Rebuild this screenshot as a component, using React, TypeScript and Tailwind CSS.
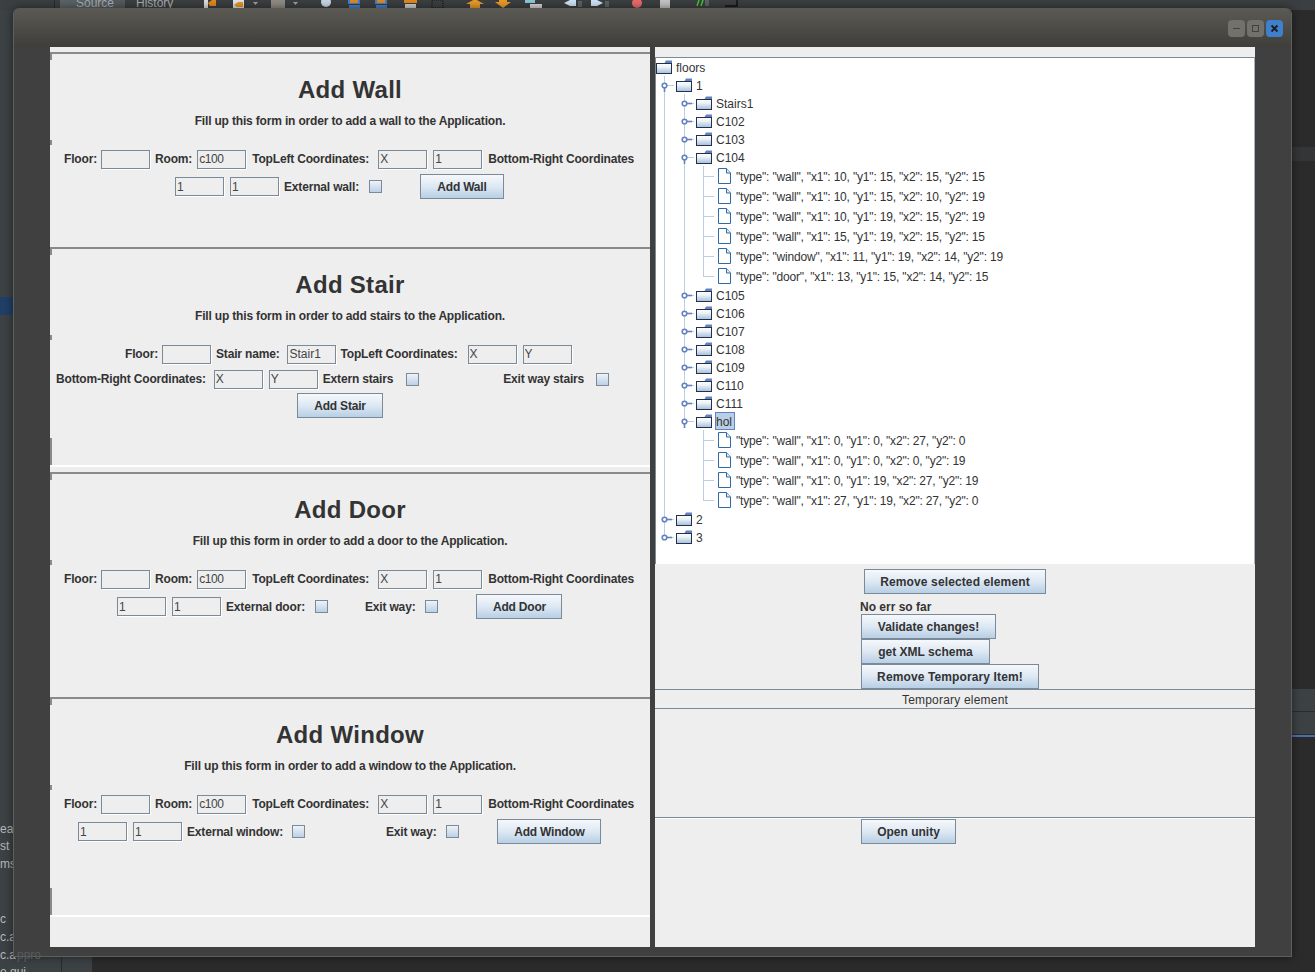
import React from "react";

const FONT = "font-['Liberation_Sans',Arial,sans-serif]";

function Lbl({ children, className = "" }: { children: React.ReactNode; className?: string }) {
  return <span className={`text-[12px] leading-[14px] font-bold tracking-[-0.17px] text-[#333333] whitespace-nowrap ${className}`}>{children}</span>;
}

function Field({ value = "", className = "" }: { value?: string; className?: string }) {
  return (
    <input
      readOnly
      value={value}
      className={`w-[49px] h-[19px] mr-[1px] border border-[#7a8a99] shadow-[1px_1px_0_#ffffff] bg-[#eeeeee] pl-[1px] pr-[2px] text-[12px] text-[#444444] outline-none ${FONT} ${className}`}
    />
  );
}

function Check({ className = "" }: { className?: string }) {
  return <span className={`block w-[13px] h-[13px] border border-[#7a8a99] bg-gradient-to-b from-[#eef3f8] to-[#bcd0e6] ${className}`} />;
}

function Btn({ children, className = "" }: { children: React.ReactNode; className?: string }) {
  return (
    <button className={`h-[25px] shrink-0 border border-[#7a8a99] bg-gradient-to-b from-[#f6f8fb] via-[#dde8f3] to-[#b8cfe5] text-[12px] font-bold text-[#333333] flex items-center justify-center ${FONT} ${className}`}>
      {children}
    </button>
  );
}

function Section({
  title,
  sub,
  h,
  whiteBottom,
  children,
}: {
  title: string;
  sub: string;
  h: string;
  whiteBottom?: boolean;
  children: React.ReactNode;
}) {
  return (
    <section className={`relative shrink-0 border-t-2 border-[#8a8a8a] ${h} flex flex-col`}>
      <span className="absolute left-0 top-0 w-[2px] h-[6px] bg-[#8a8a8a]" />
      <span className="absolute left-0 top-[86px] w-[2px] h-[5px] bg-[#8a8a8a]" />
      {whiteBottom && <span className="absolute left-0 bottom-[7px] w-[2px] h-[27px] bg-[#8a8a8a]" />}
      {whiteBottom && <span className="absolute left-0 right-0 bottom-[5px] h-[2px] bg-white" />}
      <h2 className="mt-[22px] h-[28px] text-center text-[24px] leading-[28px] font-bold tracking-[0.3px] text-[#333333]">{title}</h2>
      <p className="mt-[10px] h-[14px] text-center text-[12px] leading-[14px] font-bold tracking-[-0.17px] text-[#333333]">{sub}</p>
      {children}
    </section>
  );
}

type RowProps = { className?: string; children: React.ReactNode };
function Row({ className = "", children }: RowProps) {
  return <div className={`flex items-center ${className}`}>{children}</div>;
}

function FirstRow({ room = "c100" }: { room?: string }) {
  return (
    <Row className="mt-[21px] h-[20px] pl-[14px]">
      <Lbl>Floor:</Lbl>
      <Field className="ml-[4px]" />
      <Lbl className="ml-[4px]">Room:</Lbl>
      <Field value={room} className="ml-[5px] tracking-[-0.4px]" />
      <Lbl className="ml-[5px]">TopLeft Coordinates:</Lbl>
      <Field value="X" className="ml-[9px]" />
      <Field value="1" className="ml-[5px]" />
      <Lbl className="ml-[5px]">Bottom-Right Coordinates</Lbl>
    </Row>
  );
}

function Folder() {
  return (
    <svg width="16" height="14" viewBox="0 0 16 14" className="shrink-0">
      <defs>
        <linearGradient id="fg" x1="0" y1="0" x2="0" y2="1">
          <stop offset="0" stopColor="#ffffff" />
          <stop offset="0.35" stopColor="#eef3f8" />
          <stop offset="1" stopColor="#a3bfdc" />
        </linearGradient>
      </defs>
      <rect x="0.5" y="3.5" width="15" height="10" fill="url(#fg)" stroke="#22324a" />
      <path d="M8.5 3 L10 0.5 H16 V3 Z" fill="#6382bf" />
    </svg>
  );
}

function Leaf() {
  return (
    <svg width="13" height="16" viewBox="0 0 13 16" className="shrink-0">
      <path d="M0.5 0.5 H8.5 L12.5 5 V15.5 H0.5 Z" fill="#ffffff" stroke="#2f6aa8" />
      <path d="M8.5 0.5 V5 H12.5" fill="#dce8f4" stroke="#2f6aa8" />
    </svg>
  );
}

type Conn = {
  verts?: [number, number, number][];
  hline?: [number, number];
  handle?: { x: number; open: boolean };
};

function Gutter({ w, h, c }: { w: number; h: number; c: Conn }) {
  const m = h / 2;
  return (
    <svg width={w} height={h} viewBox={`0 0 ${w} ${h}`} className="shrink-0">
      {(c.verts || []).map(([x, a, b], i) => (
        <line key={i} x1={x + 0.5} x2={x + 0.5} y1={a} y2={b} stroke="#b8cfe5" />
      ))}
      {c.hline && <line x1={c.hline[0]} x2={c.hline[1]} y1={m + 0.5} y2={m + 0.5} stroke="#b8cfe5" />}
      {c.handle && (
        <g>
          {c.handle.open ? (
            <line x1={c.handle.x + 0.5} x2={c.handle.x + 0.5} y1={m} y2={m + 7} stroke="#6382bf" strokeWidth="1.6" />
          ) : (
            <line x1={c.handle.x + 0.5} x2={c.handle.x + 8} y1={m + 0.5} y2={m + 0.5} stroke="#6382bf" strokeWidth="1.6" />
          )}
          <circle cx={c.handle.x + 0.5} cy={m + 0.5} r="2.3" fill="#ffffff" stroke="#6382bf" strokeWidth="1.6" />
        </g>
      )}
    </svg>
  );
}

const V1: [number, number, number] = [8, 0, 20];
const V2: [number, number, number] = [28, 0, 20];

function FolderRow({ label, level, open, last, selected }: { label: string; level: 0 | 1 | 2; open?: boolean; last?: boolean; selected?: boolean }) {
  let g: React.ReactNode = null;
  if (level === 1) {
    g = (
      <Gutter
        w={20}
        h={18}
        c={{ verts: [[8, 0, last ? 9 : 18]], hline: [8, 18], handle: { x: 8, open: !!open } }}
      />
    );
  } else if (level === 2) {
    g = (
      <Gutter
        w={40}
        h={18}
        c={{ verts: [V1, [28, 0, selected ? 9 : 18]], hline: [28, 38], handle: { x: 28, open: !!open } }}
      />
    );
  }
  return (
    <div className="flex items-center h-[18px]">
      {g}
      <Folder />
      <span
        className={`ml-[3px] h-[18px] pr-[2px] border text-[12px] leading-[18px] text-[#333333] whitespace-nowrap ${
          selected ? "bg-[#b8cfe5] border-[#6382bf]" : "border-transparent"
        }`}
      >
        {label}
      </span>
    </div>
  );
}

function LeafRow({ text, last, l2 = true }: { text: string; last?: boolean; l2?: boolean }) {
  const verts: [number, number, number][] = [V1, [47, 0, last ? 10 : 20]];
  if (l2) verts.push(V2);
  return (
    <div className="flex items-center h-[20px]">
      <Gutter w={62} h={20} c={{ verts, hline: [47, 58] }} />
      <Leaf />
      <span className="ml-[5px] pt-[2px] text-[12px] leading-[14px] tracking-[-0.18px] text-[#333333] whitespace-nowrap">{text}</span>
    </div>
  );
}

function Tree() {
  return (
    <div className="h-[507px] shrink-0 border-t border-l border-r border-[#7a8a99] border-r-[#a9b3bd] bg-white overflow-hidden">
      <FolderRow label="floors" level={0} />
      <FolderRow label="1" level={1} open />
      <FolderRow label="Stairs1" level={2} />
      <FolderRow label="C102" level={2} />
      <FolderRow label="C103" level={2} />
      <FolderRow label="C104" level={2} open />
      <LeafRow text={'"type": "wall", "x1": 10, "y1": 15, "x2": 15, "y2": 15'} />
      <LeafRow text={'"type": "wall", "x1": 10, "y1": 15, "x2": 10, "y2": 19'} />
      <LeafRow text={'"type": "wall", "x1": 10, "y1": 19, "x2": 15, "y2": 19'} />
      <LeafRow text={'"type": "wall", "x1": 15, "y1": 19, "x2": 15, "y2": 15'} />
      <LeafRow text={'"type": "window", "x1": 11, "y1": 19, "x2": 14, "y2": 19'} />
      <LeafRow text={'"type": "door", "x1": 13, "y1": 15, "x2": 14, "y2": 15'} last />
      <FolderRow label="C105" level={2} />
      <FolderRow label="C106" level={2} />
      <FolderRow label="C107" level={2} />
      <FolderRow label="C108" level={2} />
      <FolderRow label="C109" level={2} />
      <FolderRow label="C110" level={2} />
      <FolderRow label="C111" level={2} />
      <FolderRow label="hol" level={2} open selected />
      <LeafRow l2={false} text={'"type": "wall", "x1": 0, "y1": 0, "x2": 27, "y2": 0'} />
      <LeafRow l2={false} text={'"type": "wall", "x1": 0, "y1": 0, "x2": 0, "y2": 19'} />
      <LeafRow l2={false} text={'"type": "wall", "x1": 0, "y1": 19, "x2": 27, "y2": 19'} />
      <LeafRow l2={false} text={'"type": "wall", "x1": 27, "y1": 19, "x2": 27, "y2": 0'} last />
      <FolderRow label="2" level={1} />
      <FolderRow label="3" level={1} last />
    </div>
  );
}

function Backdrop() {
  const t = "absolute left-0 text-[12px] leading-[14px] text-[#b4b8bb] whitespace-nowrap";
  return (
    <div className={`absolute inset-0 overflow-hidden bg-[#2b2b2b] ${FONT}`}>
      <div className="absolute left-0 top-0 right-0 h-[10px] bg-[#3c3f41]" />
      <div className="absolute left-[54px] top-0 w-[1px] h-[10px] bg-[#2b2b2b]" />
      <div className="absolute left-[60px] top-0 w-[65px] h-[10px] bg-gradient-to-r from-[#5c6468] to-[#525a5e]" />
      <span className="absolute left-[76px] top-[-4px] text-[12px] leading-[14px] text-[#a8adb0]">Source</span>
      <span className="absolute left-[136px] top-[-4px] text-[12px] leading-[14px] text-[#a8adb0]">History</span>
      <svg className="absolute left-[200px] top-0" width="540" height="10" viewBox="0 0 540 10">
        <rect x="4" y="0" width="4" height="8" fill="#dddddd" />
        <path d="M8 3 L12 0 H16 V6 H10Z" fill="#e08a1e" />
        <rect x="33" y="0" width="11" height="8" fill="#dfe6ee" />
        <path d="M34 5 L38 2 H43 V7 H37Z" fill="#e8961e" />
        <path d="M53 2 H58 L55.5 5Z" fill="#a0a0a0" />
        <rect x="71" y="0" width="14" height="8" fill="#8f8b84" />
        <path d="M93 2 H98 L95.5 5Z" fill="#a0a0a0" />
        <circle cx="126" cy="2" r="5" fill="#c9d6e2" />
        <path d="M148 0 H160 V4 H148Z M149 5 H160 V8 H149Z" fill="#3f7fd0" />
        <path d="M150 0 H158 V3 H150Z" fill="#e0891c" />
        <path d="M175 0 H187 V4 H175Z M176 5 H187 V8 H176Z" fill="#3f7fd0" />
        <path d="M177 0 H185 V3 H177Z" fill="#e0891c" />
        <rect x="204" y="0" width="13" height="3" fill="#e0891c" />
        <rect x="205" y="4" width="11" height="4" fill="#cfcfcf" />
        <rect x="232" y="0" width="11" height="8" fill="none" stroke="#111111" strokeDasharray="1 1" />
        <path d="M270 8 V4 H266 L275 -1 L284 4 H280 V8Z" fill="#e99a2a" />
        <path d="M299 -2 H307 V2 H311 L303 8 L295 2 H299Z" fill="#e99a2a" />
        <rect x="325" y="0" width="10" height="3" fill="#8cc8d8" />
        <rect x="330" y="4" width="12" height="4" fill="#d5d5d5" />
        <path d="M364 3 L370 0 H376 V6 H370Z" fill="#cfe3f5" />
        <rect x="378" y="1" width="4" height="6" fill="#5c6265" />
        <path d="M391 0 H397 L403 3 L397 6 H391Z" fill="#cfe3f5" />
        <rect x="405" y="1" width="4" height="6" fill="#5c6265" />
        <circle cx="437" cy="3" r="5" fill="#e96a6a" />
        <rect x="460" y="0" width="10" height="8" fill="#c4c4c4" />
        <path d="M497 6 L499 0 M501 6 L503 0" stroke="#44c638" strokeWidth="1.5" />
        <rect x="505" y="0" width="4" height="6" fill="#5c6265" />
        <path d="M525 6 H537 V0" fill="none" stroke="#111111" strokeWidth="1.4" />
      </svg>

      <div className="absolute left-0 top-[10px] bottom-0 w-[61px] bg-[#3c4144]" />
      <div className="absolute left-[61px] bottom-0 w-[31px] h-[20px] bg-[#3c4144] border-l border-[#2b2b2b]" />
      <div className="absolute left-0 top-[297px] w-[14px] h-[18px] bg-[#1f3f66]" />
      <span className={`${t} top-[822px]`}>ea</span>
      <span className={`${t} top-[839px]`}>st</span>
      <span className={`${t} top-[857px]`}>ms</span>
      <span className={`${t} top-[912px]`}>c</span>
      <span className={`${t} top-[930px]`}>c.a</span>
      <span className={`${t} top-[948px]`}>c.a</span>
      <span className={`${t} top-[965px]`}>e.gui</span>
      <div className="absolute right-0 top-[147px] w-[23px] h-[14px] bg-[#333537]" />
      <div className="absolute right-0 top-[689px] w-[23px] h-[22px] bg-[#3c4144]" />
      <div className="absolute right-0 top-[712px] w-[23px] h-[22px] bg-[#3c4144]" />
      <div className="absolute right-0 top-[735px] w-[23px] h-[2px] bg-[#4b6eaf]" />
    </div>
  );
}

function WinBtn({ className = "", children }: { className?: string; children: React.ReactNode }) {
  return <span className={`w-[17px] h-[17px] rounded-[4px] flex items-center justify-center ${className}`}>{children}</span>;
}

export default function App() {
  return (
    <div className={`relative w-[1315px] h-[972px] overflow-hidden ${FONT}`}>
      <Backdrop />
      <div className="relative ml-[13px] pt-[8px] w-[1279px]">
        <div className="h-[949px] rounded-t-[6px] border-b border-l border-r border-[#5f5f5f] bg-[#404040] shadow-[0_0_8px_rgba(0,0,0,0.5)] flex flex-col">
          <header className="h-[39px] shrink-0 rounded-t-[6px] bg-gradient-to-b from-[#5b5a55] to-[#3f3e3a] flex items-center justify-end gap-[2px] pr-[8px] pt-[1px]">
            <WinBtn className="bg-[#72716c]">
              <span className="w-[7px] h-[1px] bg-[#42413e]" />
            </WinBtn>
            <WinBtn className="bg-[#72716c]">
              <span className="w-[7px] h-[7px] border border-[#42413e]" />
            </WinBtn>
            <WinBtn className="bg-[#3f80cc]">
              <svg width="9" height="9" viewBox="0 0 9 9">
                <path d="M1.5 1.5 L7.5 7.5 M7.5 1.5 L1.5 7.5" stroke="#1d1d1d" strokeWidth="1.8" />
              </svg>
            </WinBtn>
          </header>
          <div className="flex gap-[5px] pl-[36px]">
            <main className="w-[600px] h-[900px] shrink-0 bg-[#eeeeee] pt-[5px] flex flex-col">
              <Section title="Add Wall" sub="Fill up this form in order to add a wall to the Application." h="h-[195px]">
                <FirstRow />
                <Row className="h-[25px] mt-[5px] pl-[125px]">
                  <Field value="1" />
                  <Field value="1" className="ml-[5px]" />
                  <Lbl className="ml-[4px]">External wall:</Lbl>
                  <Check className="ml-[10px]" />
                  <Btn className="ml-[38px] w-[84px] tracking-[-0.2px]">Add Wall</Btn>
                </Row>
              </Section>
              <Section title="Add Stair" sub="Fill up this form in order to add stairs to the Application." h="h-[225px]" whiteBottom>
                <Row className="mt-[21px] h-[20px] pl-[75px]">
                  <Lbl>Floor:</Lbl>
                  <Field className="ml-[4px]" />
                  <Lbl className="ml-[4px]">Stair name:</Lbl>
                  <Field value="Stair1" className="ml-[8px]" />
                  <Lbl className="ml-[3px]">TopLeft Coordinates:</Lbl>
                  <Field value="X" className="ml-[10px]" />
                  <Field value="Y" className="ml-[5px]" />
                </Row>
                <Row className="mt-[5px] h-[20px] pl-[6px]">
                  <Lbl>Bottom-Right Coordinates:</Lbl>
                  <Field value="X" className="ml-[8px]" />
                  <Field value="Y" className="ml-[5px]" />
                  <Lbl className="ml-[4px]">Extern stairs</Lbl>
                  <Check className="ml-[13px]" />
                  <Lbl className="ml-[84px]">Exit way stairs</Lbl>
                  <Check className="ml-[12px]" />
                </Row>
                <Row className="mt-[4px] h-[25px] pl-[247px]">
                  <Btn className="w-[86px] tracking-[-0.2px]">Add Stair</Btn>
                </Row>
              </Section>
              <Section title="Add Door" sub="Fill up this form in order to add a door to the Application." h="h-[225px]">
                <FirstRow />
                <Row className="h-[25px] mt-[5px] pl-[67px]">
                  <Field value="1" />
                  <Field value="1" className="ml-[5px]" />
                  <Lbl className="ml-[4px]">External door:</Lbl>
                  <Check className="ml-[10px]" />
                  <Lbl className="ml-[37px]">Exit way:</Lbl>
                  <Check className="ml-[10px]" />
                  <Btn className="ml-[38px] w-[86px] tracking-[-0.2px]">Add Door</Btn>
                </Row>
              </Section>
              <Section title="Add Window" sub="Fill up this form in order to add a window to the Application." h="h-[225px]" whiteBottom>
                <FirstRow />
                <Row className="h-[25px] mt-[5px] pl-[28px]">
                  <Field value="1" />
                  <Field value="1" className="ml-[5px]" />
                  <Lbl className="ml-[4px]">External window:</Lbl>
                  <Check className="ml-[9px]" />
                  <Lbl className="ml-[81px]">Exit way:</Lbl>
                  <Check className="ml-[10px]" />
                  <Btn className="ml-[38px] w-[104px] tracking-[-0.2px]">Add Window</Btn>
                </Row>
              </Section>
            </main>
            <aside className="w-[600px] h-[900px] shrink-0 bg-[#eeeeee] pt-[10px] flex flex-col">
              <Tree />
              <div className="flex justify-center pt-[5px]">
                <Btn className="w-[182px] tracking-[0.12px]">Remove selected element</Btn>
              </div>
              <div className="h-[20px] pl-[205px] pt-[6px]">
                <span className="block text-[12px] leading-[14px] font-bold text-[#333333] whitespace-nowrap">No err so far</span>
              </div>
              <div className="pl-[206px] flex flex-col items-start">
                <Btn className="w-[135px]">Validate changes!</Btn>
                <Btn className="w-[129px]">get XML schema</Btn>
                <Btn className="w-[178px] tracking-[0.12px]">Remove Temporary Item!</Btn>
              </div>
              <div className="h-[20px] shrink-0 border-t border-b border-[#7a8a99] pt-[1px] text-center text-[12px] leading-[18px] tracking-[0.2px] text-[#333333]">Temporary element</div>
              <div className="h-[109px] shrink-0 border-b border-[#7a8a99]" />
              <div className="border-t border-white pl-[206px]">
                <Btn className="w-[95px]">Open unity</Btn>
              </div>
            </aside>
          </div>
        </div>
      </div>
      <span className="absolute left-[17px] top-[948px] text-[12px] leading-[14px] text-[#585b5c] whitespace-nowrap overflow-hidden w-[30px]">ppro</span>
    </div>
  );
}
